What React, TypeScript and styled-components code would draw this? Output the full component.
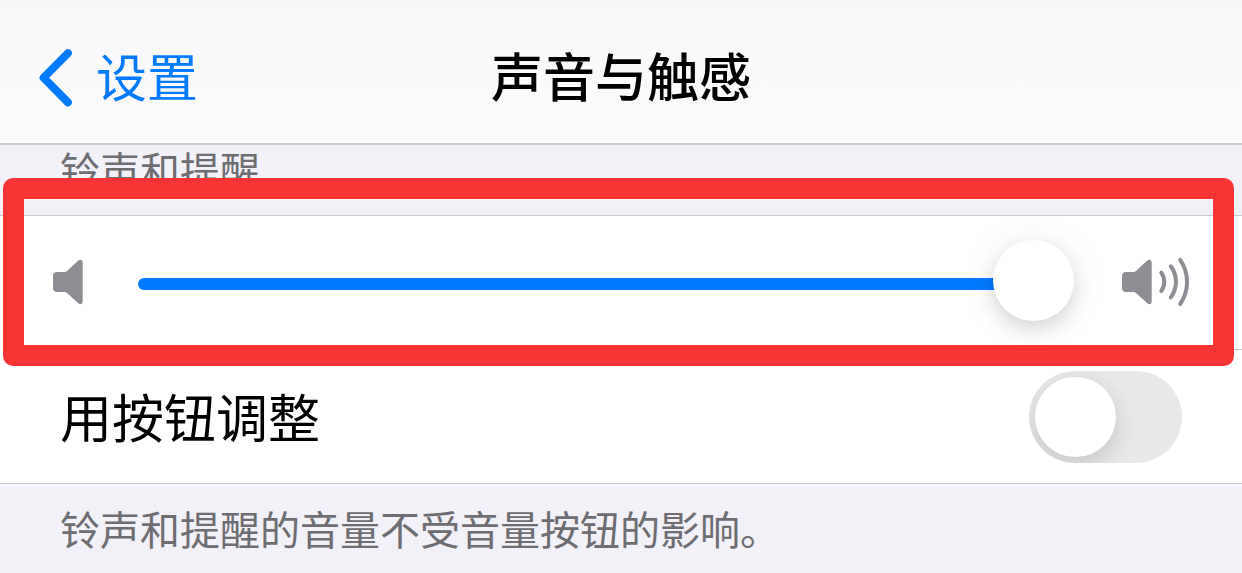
import React, { useState } from "react";
import styled, { createGlobalStyle } from "styled-components";

const GlobalStyle = createGlobalStyle`
  * { box-sizing: border-box; }
  body {
    margin: 0;
    background: #f2f1f7;
    color: #000;
    font-family: "Noto Sans CJK SC", sans-serif;
  }
`;

const Header = styled.header`
  display: grid;
  grid-template-columns: 1fr auto 1fr;
  align-items: center;
  padding: 37px 39px 30px;
  background: linear-gradient(#f8f8f9, #fbfcfe);
  border-bottom: 2px solid #c9c9cc;
`;

const BackLink = styled.a`
  display: flex;
  align-items: center;
  gap: 24px;
  color: #007aff;
  font-size: 51px;
  line-height: 76px;
  text-decoration: none;
`;

const Title = styled.h1`
  margin: 0;
  font-size: 52px;
  font-weight: 500;
  line-height: 76px;
`;

const GroupTitle = styled.h2`
  margin: 0;
  padding: 0 60px 22px;
  border-bottom: 1px solid #c9c9cc;
  color: #6d6d72;
  font-size: 40px;
  font-weight: 400;
  line-height: 48px;
`;

const Group = styled.section`
  background: #fff;
  border-bottom: 1px solid #c9c9cc;
`;

const Highlight = styled.div`
  position: relative;

  &::after {
    content: "";
    position: absolute;
    inset: -38px 8px -16px 3px;
    z-index: 1;
    border: 21px solid #f83434;
    border-radius: 10px;
    pointer-events: none;
  }
`;

const VolumeRow = styled.div`
  display: flex;
  align-items: center;
  height: 133px;
  padding: 3px 53px 0;
`;

const Separator = styled.hr`
  height: 1px;
  margin: 0 0 0 60px;
  border: 0;
  background: #c9c9cc;
`;

const Icon = styled.svg`
  display: block;
  flex: none;
  overflow: visible;
`;

const VolumeSlider = styled.input`
  appearance: none;
  flex: 1;
  min-width: 0;
  height: 12px;
  margin: 0 48px 0 55px;
  background: transparent;

  &::-webkit-slider-runnable-track {
    height: 12px;
    border-radius: 6px;
    background:
      linear-gradient(#007aff, #007aff) 0 0 / calc(var(--level) - 8px) 100% no-repeat,
      linear-gradient(#e4e4e6, #e4e4e6) 0 0 / calc(100% - 8px) 100% no-repeat;
  }

  &::-webkit-slider-thumb {
    appearance: none;
    width: 81px;
    height: 81px;
    margin-top: -38px;
    border-radius: 50%;
    background: #fff;
    box-shadow: 0 8px 20px rgba(0, 0, 0, 0.14), 0 2px 44px rgba(0, 0, 0, 0.06);
  }
`;

const SwitchRow = styled.label`
  display: flex;
  align-items: center;
  justify-content: space-between;
  height: 133px;
  padding: 0 60px;
  font-size: 52px;
  line-height: 76px;
`;

const SwitchText = styled.span`
  padding-bottom: 2px;
`;

const Switch = styled.input`
  appearance: none;
  flex: none;
  width: 153px;
  height: 92px;
  margin: 0;
  padding: 6px;
  border-radius: 46px;
  background: #e8e8ea;
  overflow: hidden;

  &::before {
    content: "";
    display: block;
    width: 81px;
    height: 80px;
    border-radius: 40px;
    background: #fff;
    box-shadow: 0 8px 24px rgba(0, 0, 0, 0.15);
  }

  &:checked {
    background: #34c759;
  }

  &:checked::before {
    margin-left: auto;
  }
`;

const Note = styled.p`
  margin: 0;
  padding: 16px 60px;
  color: #6d6d72;
  font-size: 40px;
  line-height: 56px;
`;

const speaker =
  "M4 14H11.5Q13 14 14 13L25 2.8Q26.3 1.7 27.5 1.7Q29.7 1.9 29.7 4.5V43.5Q29.7 46 27.5 46.2Q26.3 46.2 25 45L14 35Q13 34 11.5 34H4Q0 34 0 30V18Q0 14 4 14Z";

export default function App() {
  const [volume, setVolume] = useState(100);
  const [useButtons, setUseButtons] = useState(false);

  return (
    <>
      <GlobalStyle />
      <Header>
        <BackLink href="#settings">
          <Icon width="33" height="58" viewBox="0 -3 33 58" aria-hidden="true">
            <path
              d="M28.9 4.2L4.6 28.8L28.9 53.4"
              fill="none"
              stroke="currentColor"
              strokeWidth="8"
              strokeLinecap="round"
              strokeLinejoin="round"
            />
          </Icon>
          设置
        </BackLink>
        <Title>声音与触感</Title>
      </Header>
      <main>
        <GroupTitle>铃声和提醒</GroupTitle>
        <Group>
          <Highlight>
            <VolumeRow>
              <Icon width="30" height="52" viewBox="0 0 30 52" aria-hidden="true">
                <path d={speaker} fill="#8e8d94" />
              </Icon>
              <VolumeSlider
                type="range"
                aria-label="铃声和提醒"
                min={0}
                max={100}
                value={volume}
                onChange={(e) => setVolume(Number(e.target.value))}
                style={{ "--level": `${volume}%` } as React.CSSProperties}
              />
              <Icon width="67" height="52" viewBox="0 0 67 52" aria-hidden="true">
                <path d={speaker} fill="#8e8d94" />
                <path
                  d="M39.3 14.7A16 16 0 0 1 39.3 33.1M48.8 8.3A26 26 0 0 1 48.8 39.4M58.2 1.9A39 39 0 0 1 58.2 46"
                  fill="none"
                  stroke="#8e8d94"
                  strokeWidth="4"
                  strokeLinecap="round"
                />
              </Icon>
            </VolumeRow>
            <Separator />
          </Highlight>
          <SwitchRow>
            <SwitchText>用按钮调整</SwitchText>
            <Switch
              type="checkbox"
              role="switch"
              checked={useButtons}
              onChange={(e) => setUseButtons(e.target.checked)}
            />
          </SwitchRow>
        </Group>
        <Note>铃声和提醒的音量不受音量按钮的影响。</Note>
      </main>
    </>
  );
}
